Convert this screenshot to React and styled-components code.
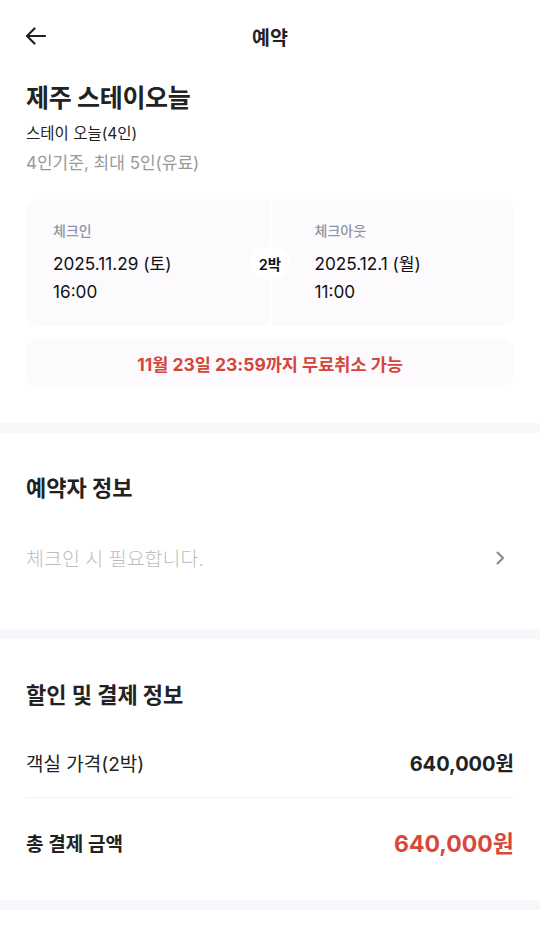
import React from 'react'
import styled, { createGlobalStyle } from 'styled-components'

const GlobalStyle = createGlobalStyle`
	html, body {
		margin: 0;
		padding: 0;
		background: #fff;
	}
	body {
		font-family: Inter, "Noto Sans CJK KR", sans-serif;
		color: #222;
		-webkit-font-smoothing: antialiased;
	}
`

const Page = styled.div`
	width: 540px;
	min-height: 936px;
	background: #fff;
`

const Header = styled.header`
	height: 72px;
	display: grid;
	grid-template-columns: 60px 1fr 60px;
	align-items: center;
	padding: 0 0 0 22px;
	box-sizing: border-box;
`

const BackButton = styled.button`
	border: 0;
	background: none;
	padding: 0;
	width: 28px;
	height: 28px;
	display: flex;
	align-items: center;
	justify-content: center;
	color: #222;
`

const HeaderTitle = styled.h1`
	margin: 0;
	text-align: center;
	font-size: 19.5px;
	font-weight: 700;
	margin-left: -22px;
`

const Section = styled.section`
	padding: ${p => p.$pad || '0 26px'};
`

const StayName = styled.h2`
	margin: 8px 0 0;
	font-size: 25px;
	font-weight: 700;
	line-height: 36px;
	letter-spacing: -0.3px;
`

const RoomName = styled.div`
	margin-top: 6px;
	font-size: 15.5px;
	line-height: 24px;
	color: #222;
`

const RoomInfo = styled.div`
	margin-top: 5px;
	font-size: 17px;
	line-height: 24px;
	color: #999;
`

const DateCard = styled.div`
	margin-top: 24px;
	display: grid;
	grid-template-columns: 1fr 1fr;
	gap: 3px;
	position: relative;
`

const DateHalf = styled.div`
	background: #fdfafe;
	border-radius: ${p => (p.$side === 'left' ? '12px 0 0 12px' : '0 12px 12px 0')};
	padding: 22px 0 22px ${p => (p.$side === 'left' ? '27px' : '43px')};
	height: 127px;
	box-sizing: border-box;
`

const DateLabel = styled.div`
	font-size: 14px;
	line-height: 20px;
	color: #8c97a6;
	font-weight: 500;
`

const DateValue = styled.div`
	font-size: 17.2px;
	line-height: 28px;
	color: #111;
	margin-top: ${p => p.$first ? '9px' : '0'};
`

const Nights = styled.div`
	position: absolute;
	left: 50%;
	top: 50%;
	transform: translate(-50%, -50%);
	background: #fff;
	border-radius: 50%;
	padding: 6px 9px;
	font-size: 14.5px;
	font-weight: 600;
	color: #111;
`

const CancelBox = styled.div`
	margin-top: 13px;
	background: #fdfafe;
	border-radius: 12px;
	height: 48px;
	display: flex;
	align-items: center;
	justify-content: center;
	color: #d4463b;
	font-size: 17.5px;
	font-weight: 700;
`

const Band = styled.div`
	height: 10px;
	background: #f6f7fb;
	margin-top: ${p => p.$top || '0'};
`

const SectionTitle = styled.h3`
	margin: 0;
	font-size: 22px;
	font-weight: 700;
	line-height: 30px;
`

const LinkRow = styled.div`
	display: flex;
	align-items: center;
	justify-content: space-between;
	margin-top: 40px;
	font-size: 19.5px;
	color: #bdbdbd;
	font-weight: 300;
`

const PriceRow = styled.div`
	display: flex;
	justify-content: space-between;
	align-items: center;
	height: ${p => p.$h || '64px'};
	border-bottom: ${p => (p.$divider ? '1px solid #f1f1f3' : 'none')};
`

const PriceLabel = styled.span`
	font-size: 19px;
	font-weight: ${p => (p.$strong ? 600 : 400)};
	color: #222;
`

const PriceValue = styled.span`
	font-size: ${p => (p.$total ? '23px' : '20px')};
	font-weight: 700;
	color: ${p => (p.$total ? '#d9473b' : '#222')};
`

export default function App() {
	return (
		<Page>
			<GlobalStyle />
			<Header>
				<BackButton aria-label="back">
					<svg width="24" height="24" viewBox="0 0 24 24" fill="none" stroke="#222" strokeWidth="2.2" strokeLinecap="round" strokeLinejoin="round">
						<path d="M21 12H3.5" />
						<path d="M10.5 4.5L3 12l7.5 7.5" />
					</svg>
				</BackButton>
				<HeaderTitle>예약</HeaderTitle>
				<div />
			</Header>

			<Section>
				<StayName>제주 스테이오늘</StayName>
				<RoomName>스테이 오늘(4인)</RoomName>
				<RoomInfo>4인기준, 최대 5인(유료)</RoomInfo>

				<DateCard>
					<DateHalf $side="left">
						<DateLabel>체크인</DateLabel>
						<DateValue $first>2025.11.29 (토)</DateValue>
						<DateValue>16:00</DateValue>
					</DateHalf>
					<DateHalf $side="right">
						<DateLabel>체크아웃</DateLabel>
						<DateValue $first>2025.12.1 (월)</DateValue>
						<DateValue>11:00</DateValue>
					</DateHalf>
					<Nights>2박</Nights>
				</DateCard>

				<CancelBox>11월 23일 23:59까지 무료취소 가능</CancelBox>
			</Section>

			<Band $top="36px" />

			<Section $pad="40px 26px 57px">
				<SectionTitle>예약자 정보</SectionTitle>
				<LinkRow>
					<span>체크인 시 필요합니다.</span>
					<svg width="20" height="20" viewBox="0 0 20 20" fill="none" stroke="#888" strokeWidth="2" strokeLinecap="round" strokeLinejoin="round" style={{ marginRight: 4 }}>
						<path d="M7.5 4.5L13 10l-5.5 5.5" />
					</svg>
				</LinkRow>
			</Section>

			<Band />

			<Section $pad="41px 26px 14px">
				<SectionTitle>할인 및 결제 정보</SectionTitle>
				<PriceRow $divider $h="70px" style={{ marginTop: 17 }}>
					<PriceLabel>객실 가격(2박)</PriceLabel>
					<PriceValue>640,000원</PriceValue>
				</PriceRow>
				<PriceRow $h="88px">
					<PriceLabel $strong>총 결제 금액</PriceLabel>
					<PriceValue $total>640,000원</PriceValue>
				</PriceRow>
			</Section>

			<Band />
		</Page>
	)
}
